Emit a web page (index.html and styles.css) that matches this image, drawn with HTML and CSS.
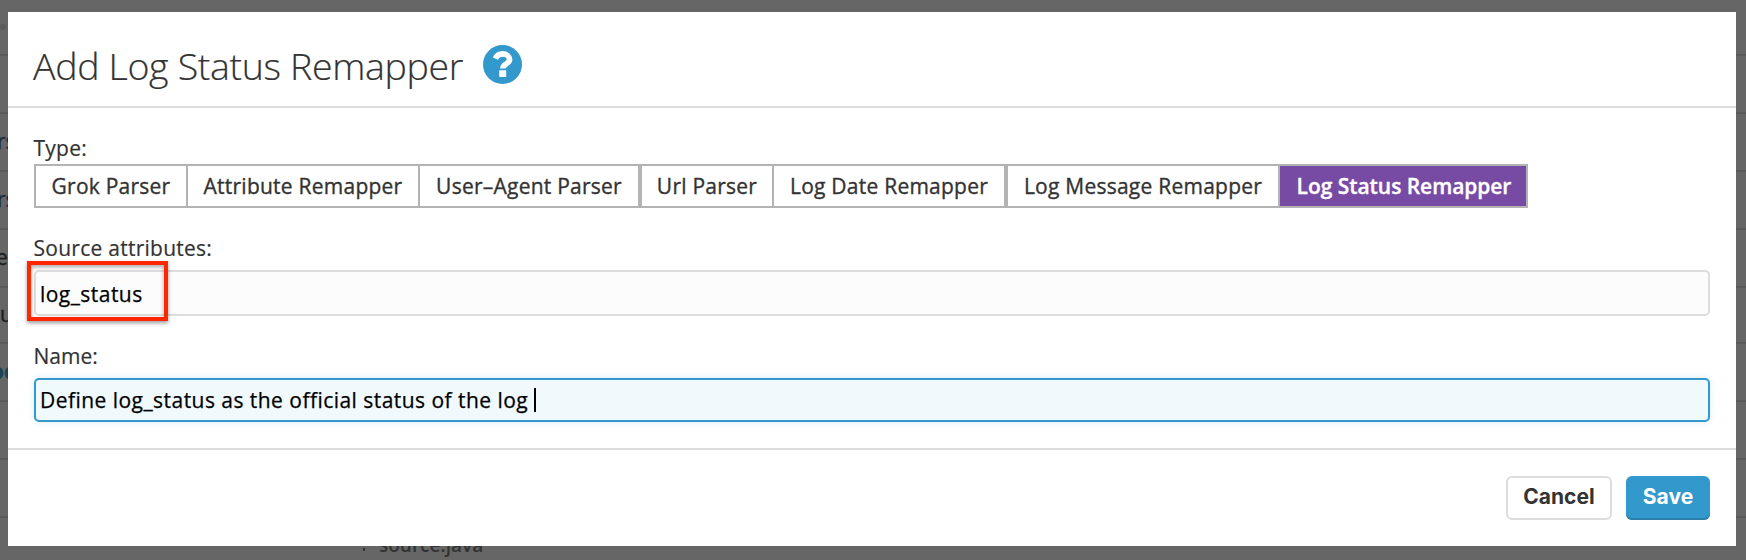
FILE: index.html
```html
<!DOCTYPE html>
<html lang="en">
<head>
<meta charset="utf-8">
<title>Add Log Status Remapper</title>
<link rel="stylesheet" href="styles.css">
</head>
<body>
<div class="page">
  <div class="row row-first"><span class="bullet"></span></div>
  <div class="row"></div>
  <div class="row"><span class="cell link">rs</span></div>
  <div class="row"><span class="cell link">rs</span></div>
  <div class="row"><span class="cell name-e">e</span></div>
  <div class="row row-short"><span class="cell name-u">u</span></div>
  <div class="row"><span class="cell add">oc</span></div>
  <div class="row"></div>
  <div class="row"></div>
  <div class="row row-last"><span class="tick"></span><span class="source">source.java</span></div>
</div>
<section class="modal">
  <header class="modal-header">
    <h1 class="title">Add Log Status Remapper</h1>
    <svg class="help" viewBox="0 0 39 39">
      <circle cx="19.5" cy="19.5" r="19.5" fill="#3399cc"/>
      <path d="M12.4 13.7C13.9 10.4 16.2 8.9 19.6 8.9C23.6 8.9 26.6 11.4 26.6 14.6C26.6 19.2 19.8 18.4 19.8 23.6" fill="none" stroke="#fff" stroke-width="5.6"/>
      <rect x="16.2" y="25.3" width="7" height="6.7" rx=".5" fill="#fff"/>
    </svg>
  </header>
  <main class="modal-body">
    <div class="label">Type:</div>
    <div class="tabs">
      <div class="tab t1"><span>Grok Parser</span></div>
      <div class="tab t2"><span>Attribute Remapper</span></div>
      <div class="tab t3"><span>User–Agent Parser</span></div>
      <div class="tab t4"><span>Url Parser</span></div>
      <div class="tab t5"><span>Log Date Remapper</span></div>
      <div class="tab t6"><span>Log Message Remapper</span></div>
      <div class="tab t7 active"><span>Log Status Remapper</span></div>
    </div>
    <div class="label label-source">Source attributes:</div>
    <div class="field field-source"><span class="value v-source">log_status</span><span class="highlight"></span></div>
    <div class="label label-name">Name:</div>
    <div class="field field-name"><span class="value v-name">Define log_status as the official status of the log</span><span class="caret"></span></div>
  </main>
  <footer class="modal-footer">
    <button class="btn cancel">Cancel</button>
    <button class="btn save">Save</button>
  </footer>
</section>
</body>
</html>
```

FILE: styles.css
```css
* { box-sizing: border-box; }
body {
  margin: 0;
  width: 1746px;
  height: 560px;
  overflow: hidden;
  position: relative;
  background: #666;
  color: #333;
  font-family: "Open Sans", "Noto Sans", sans-serif;
  font-size: 21px;
}

/* Dimmed list behind the dialog */
.page { height: 560px; overflow: hidden; }
.row {
  height: 58px;
  border-bottom: 2px solid #5a5a5a;
  display: flex;
  align-items: center;
}
.row-first { height: 56px; }
.row-short { height: 56px; }
.row-last { border-bottom: 0; }
.bullet { width: 6px; height: 6px; border-radius: 3px; background: #5c5c5c; }
.cell { line-height: 28px; color: #1c1c1c; padding-bottom: 2px; -webkit-text-stroke: .3px; }
.link { color: #1b2b3a; margin-left: -3px; }
.name-e { margin-left: -4px; }
.name-u { margin-left: 0; }
.add { color: #174558; font-weight: 700; margin-left: -9px; }
.source {
  padding-bottom: 4px;
  line-height: 28px;
  font-size: 19px;
  font-weight: 600;
  color: #333;
}
.tick { width: 2px; height: 3px; margin: 5px 14px 0 363px; background: #333; }

/* Dialog */
.modal {
  position: absolute;
  left: 8px;
  top: 12px;
  width: 1728px;
  height: 534px;
  background: #fff;
  display: flex;
  flex-direction: column;
}
.modal-header {
  height: 96px;
  padding-left: 25px;
  border-bottom: 2px solid #ddd;
  display: flex;
  align-items: flex-start;
}
.title {
  margin: 28px 0 0;
  width: 450px;
  font-size: 37.5px;
  line-height: 52px;
  font-weight: 300;
  letter-spacing: -.34px;
  white-space: nowrap;
  -webkit-text-stroke: .2px;
}
.help { width: 39px; height: 39px; margin-top: 32.5px; }
.modal-body { height: 342px; padding: 25px 26px 0; border-bottom: 2px solid #ddd; }
.label { height: 31px; line-height: 30px; letter-spacing: .26px; text-indent: -.5px; -webkit-text-stroke: .2px; }
.label-source { margin-top: 25px; height: 37px; }
.label-name { margin-top: 25px; height: 37px; letter-spacing: 0; }

.tabs { display: flex; width: 1494px; height: 44px; border: 2px solid #b3b3b3; }
.tab {
  border-right: 2px solid #b3b3b3;
  display: flex;
  align-items: center;
  justify-content: center;
  line-height: 28px;
  white-space: nowrap;
  letter-spacing: .24px;
  -webkit-text-stroke: .35px;
}
.t1 { width: 152px; }
.t2 { width: 232px; }
.t3 { width: 222px; border-right-width: 4px; }
.t4 { width: 132px; }
.t5 { width: 234px; border-right-width: 4px; }
.t6 { width: 272px; }
.t7 { width: 246px; border-right: 0; }
.tab.active { background: #774aa4; color: #fff; font-weight: 600; letter-spacing: -.05px; padding-left: 2px; }

.field {
  position: relative;
  display: flex;
  align-items: center;
  border-radius: 5px;
  padding-left: 4px;
  color: #000;
}
.field-source { height: 46px; border: 2px solid #ddd; background: #fcfcfc; }
.field-name {
  height: 44px;
  border: 2px solid #39c;
  background: #f0f9fc;
  box-shadow: 0 0 6px rgba(51, 153, 204, .2);
}
.value { line-height: 28px; white-space: nowrap; letter-spacing: .46px; -webkit-text-stroke: .25px; }
.v-source { padding-top: 2px; }
.v-name { width: 494px; }
.caret { width: 2px; height: 24px; background: #000; }
.highlight {
  position: absolute;
  left: -9px;
  top: -11px;
  width: 141px;
  height: 60px;
  border: 4px solid #ff2600;
  box-shadow: 0 2px 4px rgba(0, 0, 0, .4), inset 0 2px 4px rgba(0, 0, 0, .35);
}

.modal-footer {
  height: 96px;
  padding: 26px 26px 0 0;
  display: flex;
  justify-content: flex-end;
  gap: 14px;
}
.btn {
  height: 44px;
  padding: 0 0 3px;
  border-radius: 6px;
  font-family: Inter, sans-serif;
  font-size: 21px;
  font-weight: 700;
}
.cancel { width: 106px; border: 2px solid #ddd; background: #fff; color: #333; }
.save { width: 84px; border: 0; box-shadow: inset 0 -2px #2b7fa9; background: #39c; color: #fff; }
```
